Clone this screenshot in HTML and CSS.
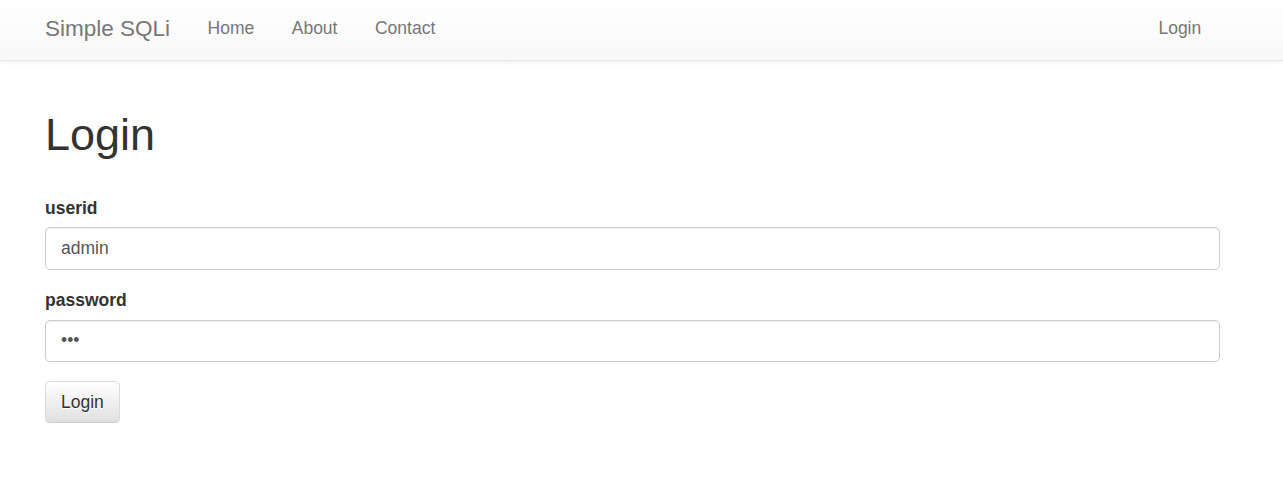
FILE: index.html
```html
<!DOCTYPE html>
<html>
<head>
<meta charset="utf-8">
<title>Simple SQLi</title>
<link rel="stylesheet" href="styles.css">
</head>
<body>
<nav class="navbar">
  <div class="navbar-inner">
    <a class="brand" href="#">Simple SQLi</a>
    <ul class="nav">
      <li><a href="#">Home</a></li>
      <li><a href="#">About</a></li>
      <li><a href="#">Contact</a></li>
    </ul>
    <ul class="nav nav-right">
      <li><a href="#">Login</a></li>
    </ul>
  </div>
</nav>
<main class="container">
  <h1 class="title">Login</h1>
  <form class="form">
    <div class="form-group">
      <label class="label" for="userid">userid</label>
      <input class="input" id="userid" type="text" value="admin">
    </div>
    <div class="form-group">
      <label class="label" for="password">password</label>
      <input class="input" id="password" type="password" value="abc">
    </div>
    <button class="btn" type="button">Login</button>
  </form>
</main>
</body>
</html>
```
FILE: styles.css
```css
* { box-sizing: border-box; }
html, body { margin: 0; padding: 0; }
body {
  font-family: "Liberation Sans", Arial, Helvetica, sans-serif;
  font-size: 17.5px;
  line-height: 1.42857;
  color: #333;
  background: #fff;
}
a { text-decoration: none; }

.navbar {
  height: 61px;
  background: linear-gradient(to bottom, #fff 0, #f8f8f8 100%);
  border-bottom: 1px solid #e7e7e7;
  box-shadow: inset 0 1px 0 rgba(255,255,255,.15), 0 1px 5px rgba(0,0,0,.075);
}
.navbar-inner {
  display: flex;
  align-items: center;
  height: 56px;
  padding-left: 26.25px;
  width: 1220px;
}
.brand {
  padding: 0 18.75px;
  font-size: 22.5px;
  line-height: 25px;
  color: #777;
  text-shadow: 0 1px 0 rgba(255,255,255,.25);
}
.nav {
  display: flex;
  list-style: none;
  margin: 0;
  padding: 0;
}
.nav a {
  display: block;
  padding: 0 18.75px;
  line-height: 25px;
  font-size: 17.5px;
  color: #777;
  text-shadow: 0 1px 0 rgba(255,255,255,.25);
}
.nav-right { margin-left: auto; }

.container {
  display: flow-root;
  padding-top: 25px;
  padding-left: 45px;
  width: 1220px;
}
.title {
  margin: 24px 0 12.5px;
  font-size: 45px;
  line-height: 1.1;
  font-weight: 500;
  color: #333;
}
.form { padding-top: 24px; }
.form-group { margin-bottom: 18.75px; }
.label {
  display: block;
  margin-bottom: 6.25px;
  font-weight: bold;
  color: #333;
}
.input {
  display: block;
  width: 100%;
  height: 42.5px;
  padding: 7.5px 15px;
  font-family: inherit;
  font-size: 17.5px;
  color: #555;
  background: #fff;
  border: 1px solid #ccc;
  border-radius: 5px;
  box-shadow: inset 0 1px 1px rgba(0,0,0,.075);
}
.btn {
  display: inline-block;
  height: 42.5px;
  padding: 7.5px 15px;
  font-family: inherit;
  font-size: 17.5px;
  line-height: 1.42857;
  color: #333;
  background: linear-gradient(to bottom, #fff 0, #e0e0e0 100%);
  border: 1px solid #ccc;
  border-color: #dbdbdb #dbdbdb #ccc;
  border-radius: 5px;
  text-shadow: 0 1px 0 #fff;
  box-shadow: inset 0 1px 0 rgba(255,255,255,.15), 0 1px 1px rgba(0,0,0,.075);
}
```
